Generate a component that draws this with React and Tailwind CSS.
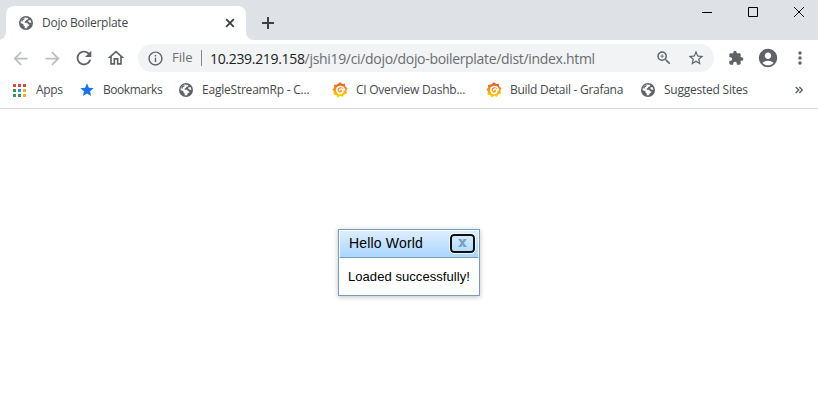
import React from "react";
import {
  MdArrowBack, MdArrowForward, MdRefresh, MdOutlineHome, MdOutlineInfo, MdOutlineZoomIn,
  MdStarBorder, MdExtension, MdAccountCircle, MdMoreVert, MdStar,
} from "react-icons/md";

function Globe() {
  return (
    <svg viewBox="0 0 14 14" className="size-[14px] shrink-0">
      <circle cx="7" cy="7" r="7" fill="#5f6368" />
      <path d="M9.3 1.9 8.9 3.4 7.2 3.9 7 5.1 5.6 5.6 5.8 6.7 8.2 6.8 9 8.2 10.4 8.4 10.1 9.8 8.7 10.3 8 12.3 5.6 12.3 5.9 10.6 4.6 9.9 4.5 8.3 1.5 7.1 2 4.6 3.6 2.6 5.8 1.5Z" fill="#fff" />
      <path d="M3.7 2.5 5.8 2.2 5.3 3.6 3.9 4.3 3.3 5.7 2 5.1Z" fill="#5f6368" />
      <path d="M9.2 4.4 11.5 4.1 12.5 6.8 10.6 6.7 9.4 5.8Z" fill="#fff" />
    </svg>
  );
}

function Grafana() {
  return (
    <svg viewBox="0 0 16 16" className="size-4 shrink-0">
      <defs>
        <linearGradient id="flame" x1="0" y1="0" x2="0" y2="1">
          <stop offset="0" stopColor="#e8502a" />
          <stop offset=".5" stopColor="#f69724" />
          <stop offset="1" stopColor="#ffe100" />
        </linearGradient>
      </defs>
      <path d="M8.2.2 10.1 2 12.9 1.8 13.2 4.3 15.6 6.5 14.3 8.6 15 11.6 12.3 12.3 10.9 15 8.4 14 5.5 15.8 4.4 13.2 1.3 12.6 2 9.8.3 7.6 2.2 5.8 1.8 2.9 5 2.6Z" fill="url(#flame)" />
      <path d="M12.4 8C12.2 5.6 10.3 4.3 8.2 4.5 6 4.7 4.7 6.3 4.8 8.3c.2 2 1.7 3.3 3.6 3.1 1.5-.1 2.5-1.1 2.5-2.4 0-1.2-.8-2-1.9-2-1 0-1.5.6-1.4 1.3" fill="none" stroke="#fff" strokeWidth="1.5" strokeLinecap="round" />
    </svg>
  );
}

function AppsGrid() {
  return (
    <svg viewBox="0 0 13 13" className="size-[13px] shrink-0" shapeRendering="crispEdges">
      <path d="M0 0h3v3H0zM5 0h3v3H5zM10 0h3v3h-3z" fill="#d64a42" />
      <path d="M0 5h3v3H0zM0 10h3v3H0zM5 10h3v3H5z" fill="#3a9658" />
      <path d="M5 5h3v3H5z" fill="#3b84e0" />
      <path d="M10 5h3v3h-3zM10 10h3v3h-3z" fill="#e3ae35" />
    </svg>
  );
}

function TabStrip() {
  return (
    <div className="flex h-10 bg-[#dee1e6]">
      <div className="relative ml-[6px] mt-[6px] flex h-[34px] w-[240px] items-center rounded-t-[8px] bg-white pl-[13px] pr-[11px]">
        <svg viewBox="0 0 8 8" className="absolute -left-2 bottom-0 size-2"><path d="M8 0v8H0A8 8 0 0 0 8 0" fill="#fff" /></svg>
        <svg viewBox="0 0 8 8" className="absolute -right-2 bottom-0 size-2"><path d="M0 0v8h8A8 8 0 0 1 0 0" fill="#fff" /></svg>
        <Globe />
        <span className="ml-[9px] text-[12px] tracking-[-0.26px] text-[#45494d]">Dojo Boilerplate</span>
        <svg viewBox="0 0 10 10" className="ml-auto size-[10px]" fill="none" stroke="#3c4043" strokeWidth="1.8"><path d="m1.2 1.2 7.6 7.6m0-7.6L1.2 8.8" /></svg>
      </div>
      <svg viewBox="0 0 12 12" className="ml-[16px] mt-[17px] size-3" fill="none" stroke="#3c4043" strokeWidth="2"><path d="M6 0v12M0 6h12" /></svg>
      <div className="ml-auto mr-[14px] mt-[7px] flex gap-9">
        <svg viewBox="0 0 10 10" className="size-[10px]" stroke="#000"><path d="M0 5.5h10" /></svg>
        <svg viewBox="0 0 10 10" className="size-[10px]" fill="none" stroke="#000"><path d="M.5.5h9v9h-9z" /></svg>
        <svg viewBox="0 0 10 10" className="size-[10px]" stroke="#000"><path d="m0 0 10 10M10 0 0 10" /></svg>
      </div>
    </div>
  );
}

function Toolbar() {
  return (
    <div className="flex h-9 items-center pl-[10px] pr-[8px] text-[#5f6368]">
      <MdArrowBack className="size-[21px] text-[#bbbdbf]" />
      <MdArrowForward className="ml-[11px] size-[21px] text-[#bbbdbf]" />
      <MdRefresh className="ml-[10px] size-[22px]" />
      <MdOutlineHome className="ml-[11px] size-5" />
      <div className="ml-[12px] flex h-7 w-[576px] items-center rounded-full bg-[#f1f3f4] pl-[9px] pr-[9px] text-[14px]">
        <MdOutlineInfo className="size-[17px]" />
        <span className="ml-[8px] w-[21px] whitespace-nowrap text-[13px] text-[#6c7074]">File</span>
        <span className="ml-[8px] h-4 w-px bg-[#85898d]" />
        <span className="ml-[8px] whitespace-nowrap tracking-[-0.32px] text-[#696d71]"><span className="text-[#202124]">10.239.219.158</span>/jshi19/ci/dojo/dojo-boilerplate/dist/index.html</span>
        <MdOutlineZoomIn className="ml-auto size-[18px]" />
        <MdStarBorder className="ml-[14px] size-[18px]" />
      </div>
      <MdExtension className="ml-[14px] size-4" />
      <MdAccountCircle className="ml-[13px] size-[22px]" />
      <MdMoreVert className="ml-auto size-5" />
    </div>
  );
}

function Bookmarks() {
  return (
    <div className="flex h-[33px] items-center border-b border-[#d9dbde] pb-[4px] pl-[13px] pr-[14px] text-[12px] text-[#45494d] whitespace-nowrap">
      <AppsGrid />
      <span className="ml-[10px] w-[44px] tracking-[-0.3px]">Apps</span>
      <MdStar className="-ml-[1px] size-4 text-[#1a73e8]" />
      <span className="ml-[8px] w-[76px] tracking-[-0.45px]">Bookmarks</span>
      <Globe />
      <span className="ml-[9px] w-[130px] tracking-[-0.22px]">EagleStreamRp - C...</span>
      <Grafana />
      <span className="ml-[8px] w-[130px] tracking-[-0.27px]">CI Overview Dashb...</span>
      <Grafana />
      <span className="ml-[8px] w-[131px] tracking-[-0.28px]">Build Detail - Grafana</span>
      <Globe />
      <span className="ml-[9px] tracking-[-0.23px]">Suggested Sites</span>
      <svg viewBox="0 0 8 8" className="ml-auto mr-[1px] size-2" fill="none" stroke="#5f6368" strokeWidth="1.5"><path d="m.7 1 3 3-3 3m3.6-6 3 3-3 3" /></svg>
    </div>
  );
}

function Dialog() {
  return (
    <div className="ml-[338px] mt-[120px] h-[67px] w-[142px] border border-[#769dc0] bg-white font-['Liberation_Sans',sans-serif] text-black shadow-[0_1px_5px_rgba(0,0,0,0.25)]">
      <div className="flex h-[28px] items-start border-x border-t border-b border-x-white border-t-white border-b-[#769dc0] bg-linear-to-b from-[#dceeff] to-[#abd6ff] pl-[9px] pr-[3px]">
        <span className="mt-[2px] text-[14px] leading-5 tracking-[0.17px]">Hello World</span>
        <div className="ml-auto mt-[3px] flex h-[19px] w-[25px] items-center justify-center rounded-[4px] border-2 border-[#101010] outline outline-[#eaf5ff]">
          <svg viewBox="0 0 9 8" className="mb-[1px] h-2 w-[9px]" fill="none" stroke="#7d9fbf"><path d="m2 .5 5 7m0-7-5 7" strokeWidth="2.2" /><path d="M.5.6h3M5.5.6h3M.5 7.4h3M5.5 7.4h3" strokeWidth="1.2" /></svg>
        </div>
      </div>
      <div className="whitespace-nowrap pl-[9px] pt-[9px] text-[13px] leading-5 tracking-[0.06px]">Loaded successfully!</div>
    </div>
  );
}

export default function App() {
  return (
    <div className="h-[415px] w-[818px] overflow-hidden bg-white font-['Open_Sans',sans-serif]">
      <TabStrip />
      <Toolbar />
      <Bookmarks />
      <Dialog />
    </div>
  );
}
